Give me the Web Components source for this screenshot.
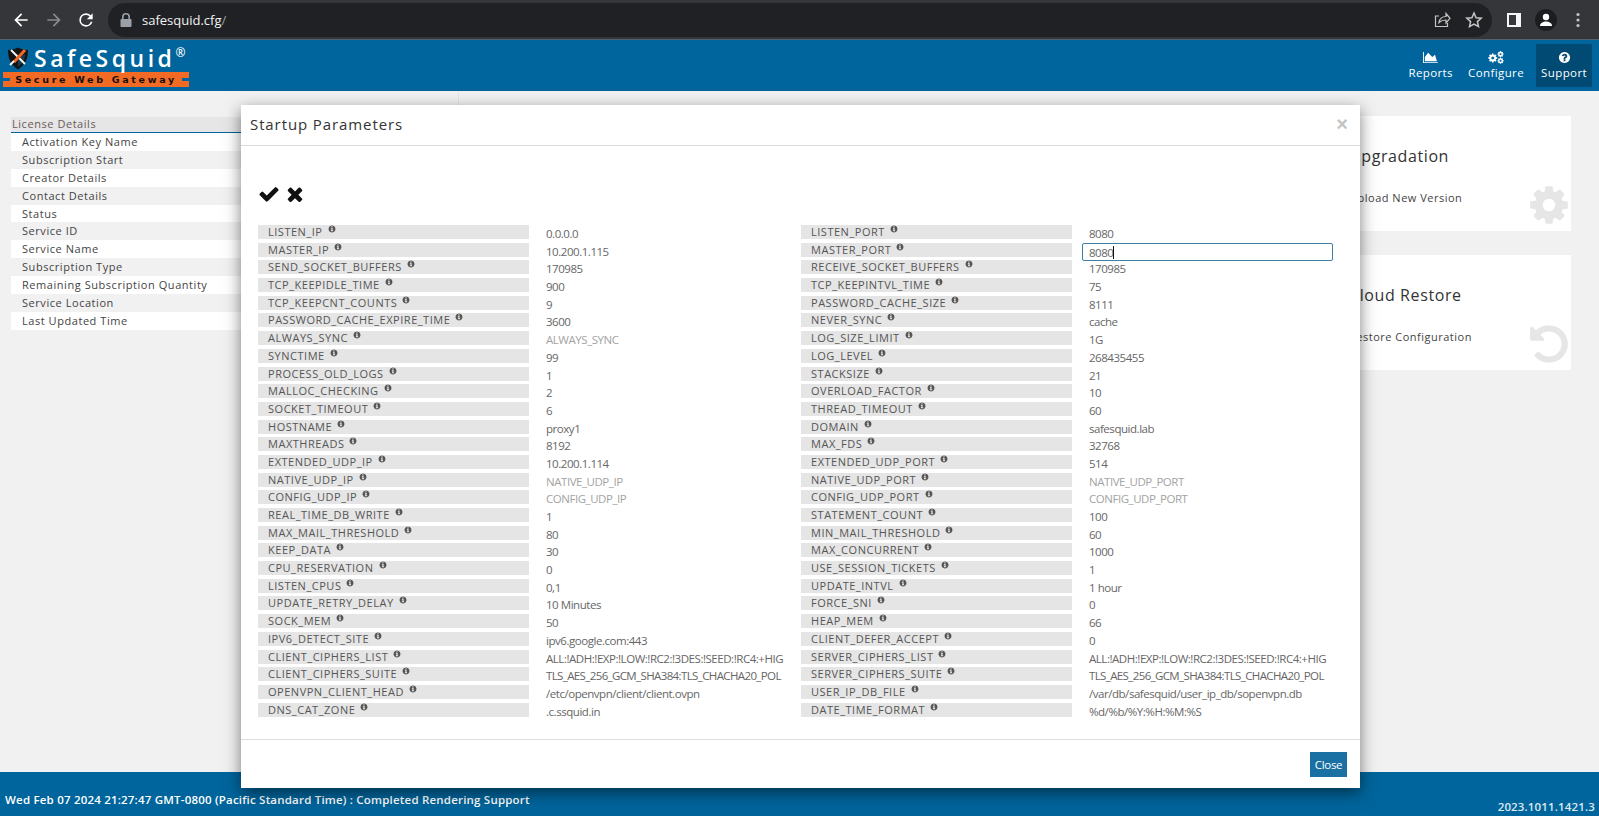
<!DOCTYPE html>
<html lang="en">
<head>
<meta charset="utf-8">
<title>SafeSquid</title>
<style>
  html, body { margin: 0; height: 100%; overflow: hidden; background: #f1f1f1; }
  body { font-family: "Open Sans", "Liberation Sans", sans-serif; }
  .shell { display: flex; flex-direction: column; height: 100vh; position: relative; }
</style>
</head>
<body>
<div class="shell">
  <browser-bar url="safesquid.cfg" trail="/"></browser-bar>
  <app-header>
    <nav-item icon="chart">Reports</nav-item>
    <nav-item icon="cogs" style="margin-left:5px">Configure</nav-item>
    <nav-item icon="question" active>Support</nav-item>
  </app-header>
  <app-main>
    <license-table slot="left"></license-table>
    <info-card slot="right" heading="Upgradation" action="Upload New Version" icon="gear"></info-card>
    <info-card slot="right" heading="Cloud Restore" action="Restore Configuration" icon="undo"></info-card>
  </app-main>
  <status-footer version="2023.1011.1421.3">Wed Feb 07 2024 21:27:47 GMT-0800 (Pacific Standard Time) : Completed Rendering Support</status-footer>
  <startup-modal heading="Startup Parameters"></startup-modal>
</div>

<script>
const FA = {
  check: ['0 0 1792 1792', 'M1671 566q0 40-28 68l-724 724-136 136q-28 28-68 28t-68-28l-136-136-362-362q-28-28-28-68t28-68l136-136q28-28 68-28t68 28l294 295 656-657q28-28 68-28t68 28l136 136q28 28 28 68z'],
  times: ['0 0 1792 1792', 'M1490 1322q0 40-28 68l-136 136q-28 28-68 28t-68-28l-294-294-294 294q-28 28-68 28t-68-28l-136-136q-28-28-28-68t28-68l294-294-294-294q-28-28-28-68t28-68l136-136q28-28 68-28t68 28l294 294 294-294q28-28 68-28t68 28l136 136q28 28 28 68t-28 68l-294 294 294 294q28 28 28 68z'],
  info: ['0 0 1792 1792', 'M1152 1376v-160q0-14-9-23t-23-9h-96v-512q0-14-9-23t-23-9h-320q-14 0-23 9t-9 23v160q0 14 9 23t23 9h96v320h-96q-14 0-23 9t-9 23v160q0 14 9 23t23 9h448q14 0 23-9t9-23zm-128-896v-160q0-14-9-23t-23-9h-192q-14 0-23 9t-9 23v160q0 14 9 23t23 9h192q14 0 23-9t9-23zm640 416q0 209-103 385.5t-279.5 279.5-385.5 103-385.5-103-279.5-279.5-103-385.5 103-385.5 279.5-279.5 385.5-103 385.5 103 279.5 279.5 103 385.5z'],
  question: ['0 0 1792 1792', 'M1024 1376v-192q0-14-9-23t-23-9h-192q-14 0-23 9t-9 23v192q0 14 9 23t23 9h192q14 0 23-9t9-23zm256-672q0-88-55.5-163t-138.5-116-170-41q-243 0-371 213-15 24 8 42l132 100q7 6 19 6 16 0 25-12 53-68 86-92 34-24 86-24 48 0 85.5 26t37.5 59q0 38-20 61t-68 45q-63 28-115.5 86.5t-52.5 125.5v36q0 14 9 23t23 9h192q14 0 23-9t9-23q0-19 21.5-49.5t54.5-49.5q32-18 49-28.5t46-35 44.5-48 28-60.5 12.5-81zm384 192q0 209-103 385.5t-279.5 279.5-385.5 103-385.5-103-279.5-279.5-103-385.5 103-385.5 279.5-279.5 385.5-103 385.5 103 279.5 279.5 103 385.5z'],
  gear: ['0 0 1792 1792', 'M1152 896q0-106-75-181t-181-75-181 75-75 181 75 181 181 75 181-75 75-181zm512-109v222q0 12-8 23t-20 13l-185 28q-19 54-39 91 35 50 107 138 10 12 10 25t-9 23q-27 37-99 108t-94 71q-12 0-26-9l-138-108q-44 23-91 38-16 136-29 186-7 28-36 28h-222q-14 0-24.5-8.5t-11.5-21.5l-28-184q-49-16-90-37l-141 107q-10 9-25 9-14 0-25-11-126-114-165-168-7-10-7-23 0-12 8-23 15-21 51-66.5t54-70.5q-27-50-41-99l-183-27q-13-2-21-12.5t-8-23.5v-222q0-12 8-23t19-13l186-28q14-46 39-92-40-57-107-138-10-12-10-24 0-10 9-23 26-36 98.5-107.5t94.5-71.5q13 0 26 10l138 107q44-23 91-38 16-136 29-186 7-28 36-28h222q14 0 24.5 8.5t11.5 21.5l28 184q49 16 90 37l142-107q9-9 24-9 13 0 25 10 129 119 165 170 7 8 7 22 0 12-8 23-15 21-51 66.5t-54 70.5q26 50 41 98l183 28q13 2 21 12.5t8 23.5z'],
  undo: ['0 0 1792 1792', 'M1664 896q0 156-61 298t-164 245-245 164-298 61q-172 0-327-72.5t-264-204.5q-7-10-6.5-22.5t8.5-20.5l137-138q10-9 25-9 16 2 23 12 73 95 179 147t225 52q104 0 198.5-40.5t163.5-109.5 109.5-163.5 40.5-198.5-40.5-198.5-109.5-163.5-163.5-109.5-198.5-40.5q-98 0-188 35.5t-160 101.5l137 138q31 30 14 69-17 40-59 40h-448q-26 0-45-19t-19-45v-448q0-42 40-59 39-17 69 14l130 129q107-101 244.5-156.5t284.5-55.5q156 0 298 61t245 164 164 245 61 298z'],
  chart: ['0 0 2048 1792', 'M2048 1536v128h-2048v-1536h128v1408h1920zm-384-1024l256 896h-1664v-576l448-576 576 576z']
};

function faIcon(name, size) {
  if (name === 'cogs') {
    const gear = FA.gear[1];
    return `<svg viewBox="0 0 2300 1792" width="${size * 1.28}" height="${size}" fill="currentColor" aria-hidden="true">
      <g transform="translate(-60 250) scale(.8)"><path d="${gear}"/></g>
      <g transform="translate(1240 -60) scale(.55)"><path d="${gear}"/></g>
      <g transform="translate(1240 860) scale(.55)"><path d="${gear}"/></g>
    </svg>`;
  }
  const [box, d] = FA[name];
  const [, , w, h] = box.split(' ').map(Number);
  return `<svg viewBox="${box}" width="${size * w / h}" height="${size}" fill="currentColor" aria-hidden="true"><path d="${d}"/></svg>`;
}

const LEFT_PARAMS = [
  ['LISTEN_IP', '0.0.0.0'], ['MASTER_IP', '10.200.1.115'], ['SEND_SOCKET_BUFFERS', '170985'],
  ['TCP_KEEPIDLE_TIME', '900'], ['TCP_KEEPCNT_COUNTS', '9'], ['PASSWORD_CACHE_EXPIRE_TIME', '3600'],
  ['ALWAYS_SYNC', 'ALWAYS_SYNC', 'hint'], ['SYNCTIME', '99'], ['PROCESS_OLD_LOGS', '1'],
  ['MALLOC_CHECKING', '2'], ['SOCKET_TIMEOUT', '6'], ['HOSTNAME', 'proxy1'],
  ['MAXTHREADS', '8192'], ['EXTENDED_UDP_IP', '10.200.1.114'], ['NATIVE_UDP_IP', 'NATIVE_UDP_IP', 'hint'],
  ['CONFIG_UDP_IP', 'CONFIG_UDP_IP', 'hint'], ['REAL_TIME_DB_WRITE', '1'], ['MAX_MAIL_THRESHOLD', '80'],
  ['KEEP_DATA', '30'], ['CPU_RESERVATION', '0'], ['LISTEN_CPUS', '0,1'],
  ['UPDATE_RETRY_DELAY', '10 Minutes'], ['SOCK_MEM', '50'], ['IPV6_DETECT_SITE', 'ipv6.google.com:443'],
  ['CLIENT_CIPHERS_LIST', 'ALL:!ADH:!EXP:!LOW:!RC2:!3DES:!SEED:!RC4:+HIG'],
  ['CLIENT_CIPHERS_SUITE', 'TLS_AES_256_GCM_SHA384:TLS_CHACHA20_POL', 'tight'],
  ['OPENVPN_CLIENT_HEAD', '/etc/openvpn/client/client.ovpn'], ['DNS_CAT_ZONE', '.c.ssquid.in']
];

const RIGHT_PARAMS = [
  ['LISTEN_PORT', '8080'], ['MASTER_PORT', '8080', 'focus'], ['RECEIVE_SOCKET_BUFFERS', '170985'],
  ['TCP_KEEPINTVL_TIME', '75'], ['PASSWORD_CACHE_SIZE', '8111'], ['NEVER_SYNC', 'cache'],
  ['LOG_SIZE_LIMIT', '1G'], ['LOG_LEVEL', '268435455'], ['STACKSIZE', '21'],
  ['OVERLOAD_FACTOR', '10'], ['THREAD_TIMEOUT', '60'], ['DOMAIN', 'safesquid.lab'],
  ['MAX_FDS', '32768'], ['EXTENDED_UDP_PORT', '514'], ['NATIVE_UDP_PORT', 'NATIVE_UDP_PORT', 'hint'],
  ['CONFIG_UDP_PORT', 'CONFIG_UDP_PORT', 'hint'], ['STATEMENT_COUNT', '100'], ['MIN_MAIL_THRESHOLD', '60'],
  ['MAX_CONCURRENT', '1000'], ['USE_SESSION_TICKETS', '1'], ['UPDATE_INTVL', '1 hour'],
  ['FORCE_SNI', '0'], ['HEAP_MEM', '66'], ['CLIENT_DEFER_ACCEPT', '0'],
  ['SERVER_CIPHERS_LIST', 'ALL:!ADH:!EXP:!LOW:!RC2:!3DES:!SEED:!RC4:+HIG'],
  ['SERVER_CIPHERS_SUITE', 'TLS_AES_256_GCM_SHA384:TLS_CHACHA20_POL', 'tight'],
  ['USER_IP_DB_FILE', '/var/db/safesquid/user_ip_db/sopenvpn.db'], ['DATE_TIME_FORMAT', '%d/%b/%Y:%H:%M:%S']
];

const LICENSE_ROWS = [
  'Activation Key Name', 'Subscription Start', 'Creator Details', 'Contact Details', 'Status', 'Service ID',
  'Service Name', 'Subscription Type', 'Remaining Subscription Quantity', 'Service Location', 'Last Updated Time'
];

class BrowserBar extends HTMLElement {
  connectedCallback() {
    const root = this.attachShadow({ mode: 'open' });
    root.innerHTML = `
      <style>
        :host { display: flex; align-items: center; flex: none; height: 40px; box-sizing: border-box; padding-left: 5px; background: #35363a; border-bottom: 1px solid #56626b; color: #fff; }
        svg { display: block; flex: none; }
        .btn { width: 32.5px; display: flex; justify-content: center; }
        .dim { color: #8a8b8e; }
        .box { display: flex; align-items: center; margin-left: 5.5px; width: 1384px; height: 34px; border-radius: 17px; background: #202124; box-sizing: border-box; padding: 0 9px 0 10px; }
        .url { margin-left: 8px; font: 13px "Open Sans", "Liberation Sans", sans-serif; color: #f1f3f4; }
        .url span { color: #9aa0a6; }
        .end { margin-left: auto; display: flex; gap: 14px; color: #c4c7c5; }
        .tools { display: flex; align-items: center; margin-left: 15px; gap: 14px; }
        .avatar { width: 22px; height: 22px; border-radius: 50%; background: #1c1d20; display: flex; align-items: center; justify-content: center; }
      </style>
      <span class="btn"><svg width="20" height="20" viewBox="0 0 24 24" fill="currentColor"><path d="M20 11H7.83l5.59-5.59L12 4l-8 8 8 8 1.41-1.41L7.83 13H20v-2z"/></svg></span>
      <span class="btn dim"><svg width="20" height="20" viewBox="0 0 24 24" fill="currentColor"><path d="M4 11h12.17l-5.59-5.59L12 4l8 8-8 8-1.41-1.41L16.17 13H4v-2z"/></svg></span>
      <span class="btn"><svg width="20" height="20" viewBox="0 0 24 24" fill="currentColor"><path d="M17.65 6.35A7.96 7.96 0 0 0 12 4a8 8 0 1 0 7.75 10h-2.08A6 6 0 1 1 12 6c1.66 0 3.14.69 4.22 1.78L13 11h7V4l-2.35 2.35z"/></svg></span>
      <div class="box">
        <svg width="16" height="16" viewBox="0 0 16 16" fill="#9aa0a6"><path d="M4 7V5a4 4 0 0 1 8 0v2h.5c.6 0 1 .4 1 1v6c0 .6-.4 1-1 1h-9c-.6 0-1-.4-1-1V8c0-.6.4-1 1-1H4zm1.6 0h4.8V5a2.4 2.4 0 0 0-4.8 0v2z"/></svg>
        <span class="url">${this.getAttribute('url')}<span>${this.getAttribute('trail')}</span></span>
        <div class="end">
          <svg width="17" height="17" viewBox="0 0 17 17" fill="none" stroke="currentColor" stroke-width="1.2"><path d="M5 5H1.5v10.5h12V12"/><path d="M5 11.5c.6-3.6 3.4-6 7-6V2.5l4 4.8-4 4.7V9c-3 0-5.300.8-7 2.500z"/></svg>
          <svg width="18" height="18" viewBox="0 0 18 18" fill="none" stroke="currentColor" stroke-width="1.5"><path d="M9 2l2.100 4.700 5.100.5-3.800 3.400 1.100 5L9 13l-4.500 2.600 1.100-5L1.800 7.200l5.100-.5z"/></svg>
        </div>
      </div>
      <div class="tools">
        <svg width="14" height="14" viewBox="0 0 14 14"><path fill="#f4f5f7" d="M0 0h14v14H0z"/><path fill="#35363a" d="M2 2h7v10H2z"/></svg>
        <span class="avatar"><svg width="14" height="14" viewBox="0 0 14 14" fill="#fff"><circle cx="7" cy="4" r="3.200"/><path d="M1 13c0-3 3-4.500 6-4.500s6 1.500 6 4.500z"/></svg></span>
        <svg width="12" height="18" viewBox="0 0 12 18" fill="#c4c7c5" style="margin-left:1px"><circle cx="6" cy="3.500" r="1.600"/><circle cx="6" cy="9" r="1.600"/><circle cx="6" cy="14.500" r="1.600"/></svg>
      </div>`;
  }
}

class AppHeader extends HTMLElement {
  connectedCallback() {
    const root = this.attachShadow({ mode: 'open' });
    root.innerHTML = `
      <style>
        :host { display: flex; flex: none; height: 51px; box-sizing: border-box; background: #00659c; padding: 0 7px 4px 3px; align-items: flex-start; }
        .logo { width: 186px; padding-top: 5px; color: #fff; }
        .top { display: flex; align-items: center; height: 26px; padding-left: 4px; }
        .top svg { flex: none; }
        .name { font: 600 23px "Open Sans", sans-serif; letter-spacing: 3.5px; margin-left: 5px; line-height: 26px; }
        .reg { font: 600 12px "Open Sans", sans-serif; align-self: flex-start; margin-left: 0; margin-top: -1px; }
        .band { display: flex; align-items: center; justify-content: center; height: 15px; margin-top: 1px; background: #f26a24; color: #17100c; font: 700 9.5px "DejaVu Sans", sans-serif; letter-spacing: 2.7px; white-space: nowrap; gap: 5px; }
        .band i { width: 8px; height: 3px; background: #00659c; flex: none; }
        nav { margin-left: auto; display: flex; padding-top: 4px; }
      </style>
      <div class="logo">
        <div class="top">
          <svg width="22" height="23" viewBox="0 0 22 23">
            <path d="M1 3c4 0 7-1 10-2.500C14 2 17 3 21 3c0 9-3 15-10 19.500C4 18 1 12 1 3z" fill="#141414"/>
            <path d="M11 11l7-4c0 5-2 9-7 13z" fill="#1d3a4c"/>
            <path d="M4 3l14 14" stroke="#f4f4f4" stroke-width="2"/>
            <path d="M18 3L7 15" stroke="#f26a24" stroke-width="3"/>
            <path d="M3 18l4-4" stroke="#f4f4f4" stroke-width="2"/>
          </svg>
          <span class="name">SafeSquid</span><span class="reg">®</span>
        </div>
        <div class="band"><i></i><span>Secure Web Gateway</span><i></i></div>
      </div>
      <nav><slot></slot></nav>`;
  }
}

class NavItem extends HTMLElement {
  connectedCallback() {
    const root = this.attachShadow({ mode: 'open' });
    root.innerHTML = `
      <style>
        :host { display: flex; flex-direction: column; align-items: center; box-sizing: border-box; height: 43px; padding: 7px 5px 0; color: #fff; font: 11.500px/16px "Open Sans", sans-serif; letter-spacing: .4px; margin-left: 7px; }
        :host([active]) { background: #004a73; }
        svg { display: block; height: 13px; margin-bottom: 1px; }
      </style>
      ${faIcon(this.getAttribute('icon'), 13)}
      <slot></slot>`;
  }
}

class AppMain extends HTMLElement {
  connectedCallback() {
    const root = this.attachShadow({ mode: 'open' });
    root.innerHTML = `
      <style>
        :host { display: grid; grid-template-columns: 458px 1fr; flex: 1; min-height: 0; }
        .left { padding: 26px 0 0 11px; }
        .right { border-left: 1px solid #e4e4e4; display: flex; flex-direction: column; align-items: flex-end; gap: 24px; padding: 25px 28px 0 0; }
      </style>
      <div class="left"><slot name="left"></slot></div>
      <div class="right"><slot name="right"></slot></div>`;
  }
}

class LicenseTable extends HTMLElement {
  connectedCallback() {
    const root = this.attachShadow({ mode: 'open' });
    const rows = LICENSE_ROWS.map((row) => `<div class="row">${row}</div>`).join('');
    root.innerHTML = `
      <style>
        :host { display: block; color: #444; font: 11px "Open Sans", sans-serif; letter-spacing: .55px; }
        .head { height: 16px; line-height: 14px; box-sizing: border-box; background: #e6e6e6; border-bottom: 1px solid #00659c; color: #6b5a5a; padding-left: 1px; }
        .row { height: 17.9px; line-height: 17.9px; padding-left: 11px; background: #fff; }
        .row:nth-child(even) { background: #f1f1f1; }
      </style>
      <div class="head">License Details</div>
      <div>${rows}</div>`;
  }
}

class InfoCard extends HTMLElement {
  connectedCallback() {
    const root = this.attachShadow({ mode: 'open' });
    root.innerHTML = `
      <style>
        :host { display: flex; justify-content: space-between; box-sizing: border-box; width: 243px; height: 115px; padding: 29px 0 0 21px; background: #fff; color: #333; }
        h3 { margin: 0 0 23px; font: 400 16px/22px "Open Sans", sans-serif; letter-spacing: .6px; }
        p { margin: 0; font: 11px/16px "Open Sans", sans-serif; letter-spacing: .5px; color: #444; }
        svg { color: #e6e6e6; margin-top: 38px; flex: none; }
      </style>
      <div><h3>${this.getAttribute('heading')}</h3><p>${this.getAttribute('action')}</p></div>
      ${faIcon(this.getAttribute('icon'), 44)}`;
  }
}

class StatusFooter extends HTMLElement {
  connectedCallback() {
    const root = this.attachShadow({ mode: 'open' });
    root.innerHTML = `
      <style>
        :host { display: flex; justify-content: space-between; flex: none; height: 44px; box-sizing: border-box; background: #00659c; color: #fff; font: 600 11.500px "Open Sans", sans-serif; padding: 20px 4px 0 5px; letter-spacing: .2px; }
        .ver { margin-top: 7px; letter-spacing: .15px; color: #dceaf2; }
      </style>
      <span><slot></slot></span>
      <span class="ver">${this.getAttribute('version')}</span>`;
  }
}

class ParamRow extends HTMLElement {
  connectedCallback() {
    const root = this.attachShadow({ mode: 'open' });
    const mode = this.getAttribute('mode') || '';
    root.innerHTML = `
      <style>
        :host { display: grid; grid-template-columns: 271px minmax(0, 1fr); grid-template-rows: 14px; column-gap: 17px; height: 14px; }
        .label { display: flex; align-items: center; background: #e5e5e5; color: #555; padding-left: 10px; font: 11px/14px "Open Sans", sans-serif; letter-spacing: .52px; white-space: nowrap; }
        .label svg { color: #555; margin: -6px 0 0 5px; flex: none; }
        .wrap { position: relative; min-width: 0; }
        .value { white-space: nowrap; color: #666; font: 11.500px/14px "Open Sans", sans-serif; letter-spacing: -.46px; padding-top: 2px; height: 16px; }
        .value.tight { letter-spacing: -.62px; }
        .value.hint { color: #a3a3a3; }
        .value.focus { position: absolute; left: -7px; right: -6px; top: 0; height: 18px; box-sizing: border-box; padding: 1px 0 0 6px; line-height: 15px; border: 1px solid #3c7f9f; border-radius: 2px; background: #fff; }
        .value.focus i { display: inline-block; width: 1px; height: 13px; background: #111; vertical-align: -2px; }
      </style>
      <div class="label">${this.getAttribute('name')}${faIcon('info', 8)}</div>
      <div class="wrap"><div class="value ${mode}">${this.getAttribute('value')}${mode === 'focus' ? '<i></i>' : ''}</div></div>`;
  }
}

class StartupModal extends HTMLElement {
  connectedCallback() {
    const root = this.attachShadow({ mode: 'open' });
    const column = (params) => params.map(([name, value, mode]) =>
      `<param-row name="${name}" value="${value}" mode="${mode || ''}"></param-row>`).join('');
    root.innerHTML = `
      <style>
        :host { position: absolute; left: 241px; top: 105px; width: 1119px; height: 683px; display: flex; flex-direction: column; background: #fff; box-shadow: 0 5px 15px rgba(0, 0, 0, .5); }
        header { display: flex; align-items: center; justify-content: space-between; box-sizing: content-box; height: 38px; padding: 0 12px 2px 9px; border-bottom: 1px solid #ddd; color: #333; }
        h2 { margin: 0; font: 400 15px "Open Sans", sans-serif; letter-spacing: .9px; }
        .x { color: #c4c4c4; font: 700 20px "Liberation Sans", sans-serif; }
        .body { flex: 1; padding: 37px 17px 0; }
        .acts { display: flex; gap: 4px; height: 42px; align-items: flex-start; color: #111; }
        .acts svg { display: block; }
        .grid { display: grid; grid-template-columns: 526px 526px; column-gap: 17px; }
        .col { display: flex; flex-direction: column; gap: 3.7px; }
        footer { display: flex; justify-content: flex-end; height: 49px; box-sizing: border-box; border-top: 1px solid #ddd; padding: 12px 13px 0 0; }
        button { width: 37px; height: 25px; padding: 0; border: 0; background: #1a70a3; color: #fff; font: 11.500px "Open Sans", sans-serif; letter-spacing: -.3px; }
      </style>
      <header><h2>${this.getAttribute('heading')}</h2><span class="x">×</span></header>
      <div class="body">
        <div class="acts">${faIcon('check', 22)}${faIcon('times', 22)}</div>
        <div class="grid">
          <div class="col">${column(LEFT_PARAMS)}</div>
          <div class="col">${column(RIGHT_PARAMS)}</div>
        </div>
      </div>
      <footer><button type="button">Close</button></footer>`;
  }
}

customElements.define('browser-bar', BrowserBar);
customElements.define('app-header', AppHeader);
customElements.define('nav-item', NavItem);
customElements.define('app-main', AppMain);
customElements.define('license-table', LicenseTable);
customElements.define('info-card', InfoCard);
customElements.define('status-footer', StatusFooter);
customElements.define('param-row', ParamRow);
customElements.define('startup-modal', StartupModal);
</script>
</body>
</html>
